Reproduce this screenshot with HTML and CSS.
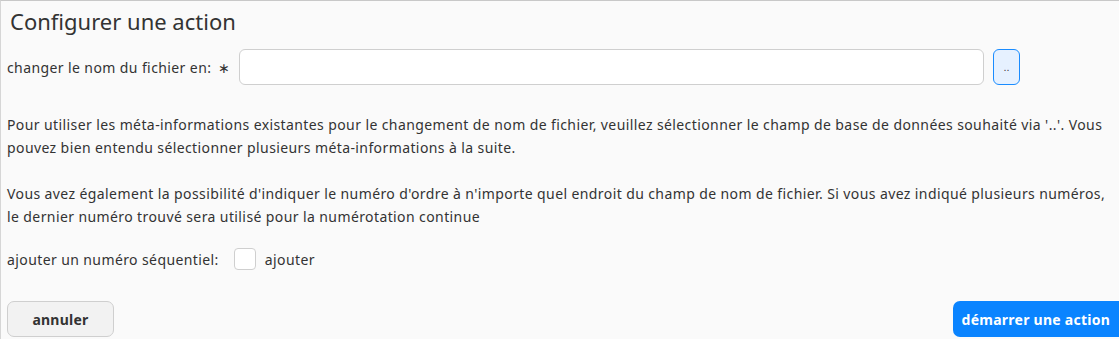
FILE: index.html
```html
<!DOCTYPE html>
<html lang="fr">
<head>
    <meta charset="UTF-8">
    <title>Configurer une action</title>
    <link rel="stylesheet" href="styles.css">
</head>
<body>
    <div class="dialog">
        <h2 class="dialog-title">Configurer une action</h2>

        <div class="field-row">
            <label class="field-label" for="filename">changer le nom du fichier en:</label>
            <span class="required">&lowast;</span>
            <input type="text" id="filename" class="text-input">
            <button class="pick-button">..</button>
        </div>

        <p class="help">Pour utiliser les méta-informations existantes pour le changement de nom de fichier, veuillez sélectionner le champ de base de données souhaité via '..'. Vous pouvez bien entendu sélectionner plusieurs méta-informations à la suite.</p>

        <p class="help">Vous avez également la possibilité d'indiquer le numéro d'ordre à n'importe quel endroit du champ de nom de fichier. Si vous avez indiqué plusieurs numéros, le dernier numéro trouvé sera utilisé pour la numérotation continue</p>

        <div class="check-row">
            <span class="field-label">ajouter un numéro séquentiel:</span>
            <label class="check">
                <span class="check-box"></span>
                ajouter
            </label>
        </div>

        <div class="actions">
            <button class="btn btn-cancel">annuler</button>
            <button class="btn btn-primary">démarrer une action</button>
        </div>
    </div>
</body>
</html>
```

FILE: styles.css
```css
html, body {
    margin: 0;
    padding: 0;
    height: 100%;
}

body {
    font-family: "Noto Sans", "Open Sans", sans-serif;
    background-color: #fafafa;
    color: #333;
    overflow: hidden;
}

.dialog {
    border-top: 1px solid #c8c8c8;
    border-left: 1px solid #d6d6d6;
    padding: 0 0 0 6px;
    height: 100%;
    box-sizing: border-box;
    letter-spacing: 0.4px;
}

.dialog-title {
    margin: 0;
    padding: 5px 0 0 3px;
    font-size: 22px;
    font-weight: normal;
    line-height: 30px;
    letter-spacing: 0;
    color: #333;
}

.field-row {
    display: flex;
    align-items: center;
    margin-top: 13px;
    padding-right: 99px;
}

.field-label {
    font-size: 14px;
}

.required {
    margin-left: 7px;
    font-size: 14px;
}

.text-input {
    flex: 1;
    height: 36px;
    margin-left: 8px;
    border: 1px solid #cfcfcf;
    border-radius: 6px;
    background: #fff;
    box-sizing: border-box;
}

.pick-button {
    width: 27px;
    height: 36px;
    margin-left: 9px;
    padding: 0;
    border: 1px solid #1a8cff;
    border-radius: 6px;
    background-color: #e6f1ff;
    color: #444;
    font-size: 11px;
    line-height: 1;
}

.help {
    margin: 28px 0 0 0;
    padding-right: 12px;
    font-size: 14px;
    line-height: 23px;
}

.help + .help {
    margin-top: 23px;
}

.check-row {
    display: flex;
    align-items: center;
    margin-top: 20px;
}

.check {
    display: flex;
    align-items: center;
    gap: 9px;
    margin-left: 15px;
    font-size: 14px;
}

.check-box {
    width: 20px;
    height: 20px;
    border: 1px solid #cfcfcf;
    border-radius: 4px;
    background: #fff;
}

.actions {
    display: flex;
    justify-content: space-between;
    margin-top: 31px;
}

.btn {
    height: 36px;
    border-radius: 7px;
    font-family: inherit;
    font-size: 14px;
    font-weight: bold;
    letter-spacing: 0.25px;
    cursor: pointer;
}

.btn-cancel {
    width: 107px;
    border: 1px solid #cfcfcf;
    background-color: #f2f2f2;
    color: #333;
}

.btn-primary {
    padding: 0 9px;
    border: none;
    border-radius: 7px 0 0 7px;
    background-color: #0a84ff;
    color: #fff;
}
```
